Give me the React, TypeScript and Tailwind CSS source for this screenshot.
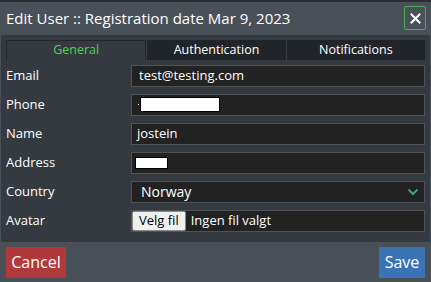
const font = { fontFamily: '"Open Sans", "Noto Sans", sans-serif' };

function Row({ label, children }: { label: string; children: React.ReactNode }) {
  return (
    <div className="flex items-center h-[29px]">
      <div className="w-[125px] text-[13px] text-white">{label}</div>
      <div className="flex-1 h-[22px] bg-[#222222] border border-[#4f5356] flex items-center text-[13px] text-white">
        {children}
      </div>
    </div>
  );
}

export default function App() {
  return (
    <div className="w-[431px] h-[282px] bg-[#495057] flex flex-col overflow-hidden" style={font}>
      <div className="h-[2px] bg-[#2b2f33]" />
      <div className="h-[33px] flex items-center justify-between pl-[6px] pr-[5px]">
        <span className="text-[15px] text-white leading-none">Edit User :: Registration date Mar 9, 2023</span>
        <div className="w-[22px] h-[24px] -mt-[1px] border border-[#43b04a] rounded-[2px] flex items-center justify-center">
          <svg width="11" height="11" viewBox="0 0 11 11">
            <path d="M1.5 1.5 L9.5 9.5 M9.5 1.5 L1.5 9.5" stroke="#ffffff" strokeWidth="2" strokeLinecap="square" />
          </svg>
        </div>
      </div>
      <div className="bg-[#343a40] mx-[1px] px-[5px] pt-[5px] pb-[7px] flex flex-col">
        <div className="flex h-[20px] text-[12.5px] text-white">
          <div className="flex-1 flex items-center justify-center border border-[#212529] border-b-0 text-[#4cd05a]">General</div>
          <div className="flex-1 flex items-center justify-center bg-[#212529] border-l border-[#3a3f44]">Authentication</div>
          <div className="flex-1 flex items-center justify-center bg-[#212529] border-l border-[#3a3f44]">Notifications</div>
        </div>
        <div className="flex flex-col mt-[1px]">
          <Row label="Email">
            <span className="pl-[7px]">test@testing.com</span>
          </Row>
          <Row label="Phone">
            <span className="ml-[6px] w-[1px] h-[1px] bg-white" />
            <span className="ml-[1px] w-[80px] h-[15px] bg-white border border-black" />
          </Row>
          <Row label="Name">
            <span className="pl-[5px]">jostein</span>
          </Row>
          <Row label="Address">
            <span className="ml-[3px] w-[33px] h-[12px] bg-white border border-black" />
          </Row>
          <Row label="Country">
            <div className="flex-1 flex items-center justify-between pl-[9px] pr-[5px]">
              <span className="text-[14px]">Norway</span>
              <svg width="12" height="8" viewBox="0 0 12 8">
                <path d="M1.5 1.5 L6 6 L10.5 1.5" stroke="#3fa089" strokeWidth="2" fill="none" />
              </svg>
            </div>
          </Row>
          <Row label="Avatar">
            <span className="h-[20px] px-[6px] bg-[#efefef] border border-[#8a8a8a] rounded-[2px] text-black flex items-center">Velg fil</span>
            <span className="pl-[5px]">Ingen fil valgt</span>
          </Row>
        </div>
      </div>
      <div className="flex-1 flex items-center justify-between px-[6px]">
        <div className="h-[31px] w-[60px] flex items-center justify-center bg-[#b03a3a] text-white text-[16px]">Cancel</div>
        <div className="h-[31px] w-[46px] flex items-center justify-center bg-[#3a74b5] text-white text-[16px]">Save</div>
      </div>
    </div>
  );
}
